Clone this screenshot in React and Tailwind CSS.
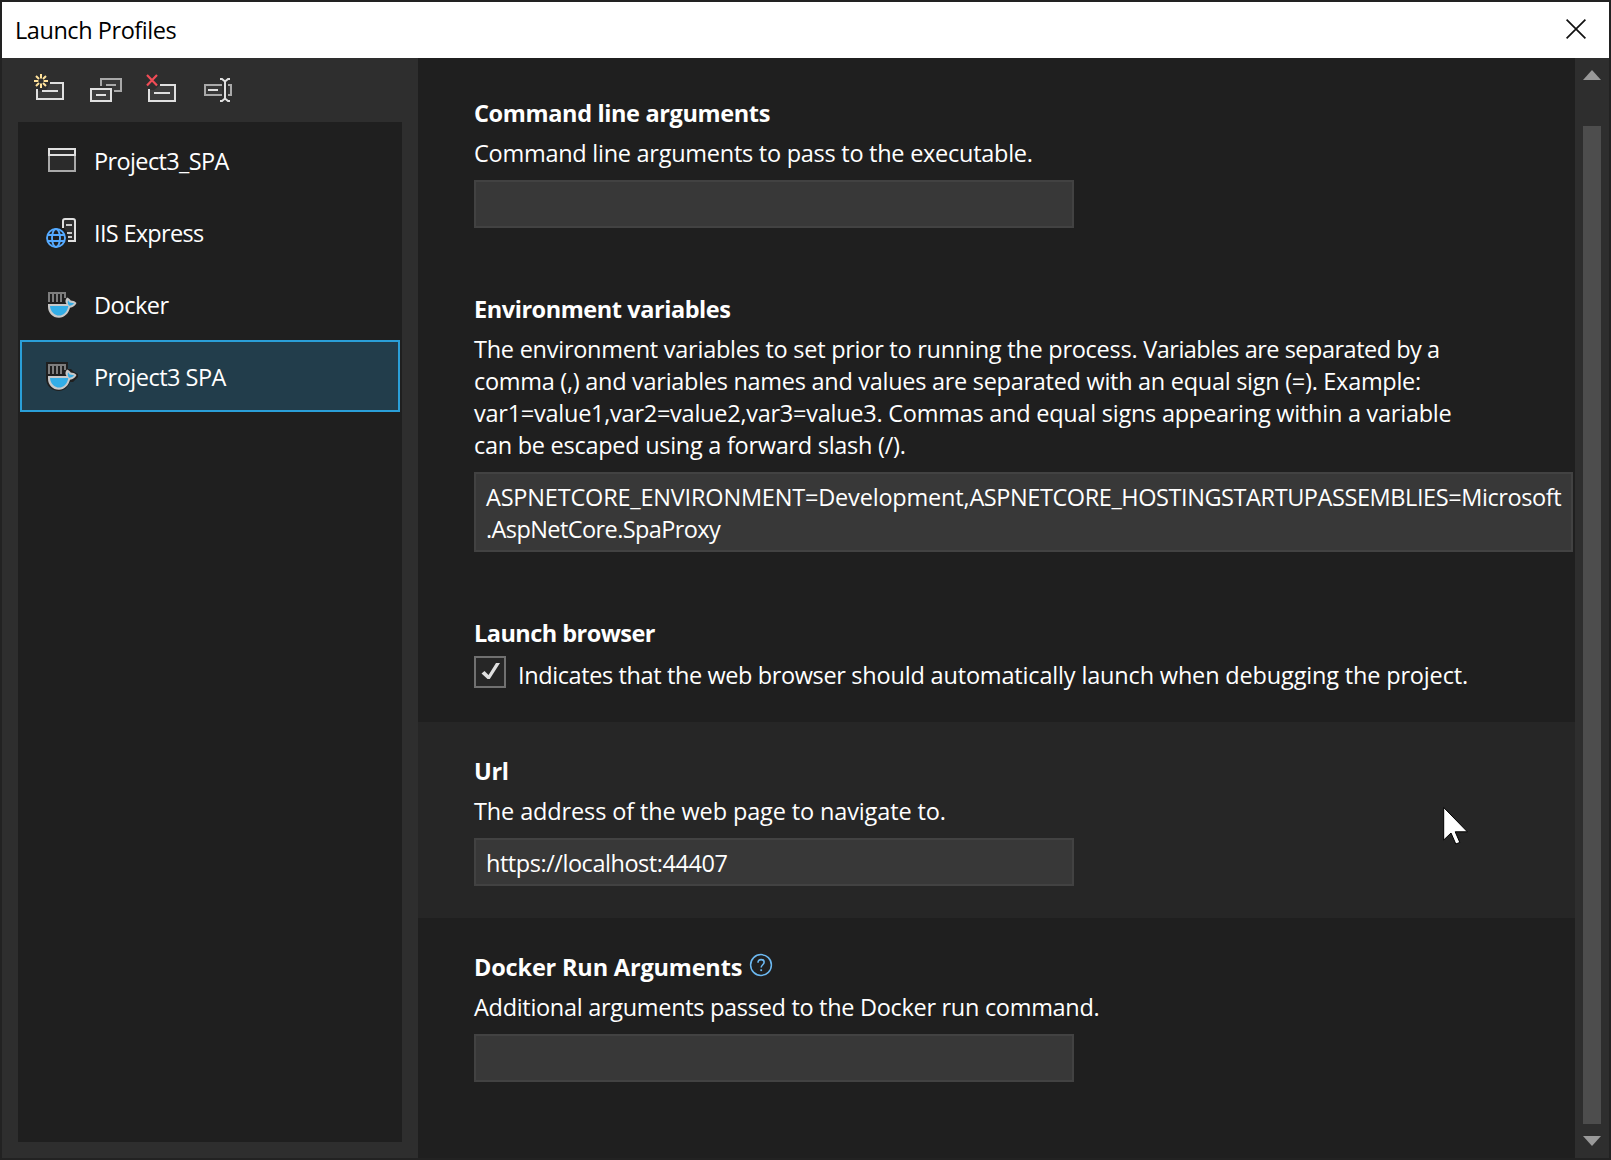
import React from "react";

function NewIcon() {
  return (
    <svg viewBox="34 72 32 32" className="h-8 w-8">
      <path d="M37 91v8h26V83H50l-4 8z" fill="#3d3d3d" />
      <path d="M37 89v10h26V83H50" fill="none" stroke="#e0e0e0" strokeWidth="2" />
      <path d="M42 91h16" stroke="#e0e0e0" strokeWidth="2" />
      <path d="M41 74v4.400M41 83.600v4.400M34 81h4.400M43.600 81h4.400M36 76l3 3M46 76l-3 3M36 86l3-3M46 86l-3-3" stroke="#ffe29b" strokeWidth="2" fill="none" />
    </svg>
  );
}

function DuplicateIcon() {
  return (
    <svg viewBox="90 72 32 32" className="h-8 w-8">
      <path d="M100 79h21v12h-9v-5h-12z" fill="#383838" />
      <path d="M101 86v-7h20v12h-7M106 85h10" fill="none" stroke="#a9a9a9" strokeWidth="2" />
      <rect x="91" y="89" width="20" height="12" fill="#3d3d3d" stroke="#e0e0e0" strokeWidth="2" />
      <path d="M96 95h10" stroke="#e0e0e0" strokeWidth="2" />
    </svg>
  );
}

function DeleteIcon() {
  return (
    <svg viewBox="146 72 32 32" className="h-8 w-8">
      <path d="M149 90v11h26V85h-15l-6 5z" fill="#3d3d3d" />
      <path d="M149 89v12h26V85h-15" fill="none" stroke="#e0e0e0" strokeWidth="2" />
      <path d="M154 93h16" stroke="#e0e0e0" strokeWidth="2" />
      <path d="M147 75l10 10.500M157 75l-10 10.500" stroke="#f04c56" strokeWidth="2.200" />
    </svg>
  );
}

function RenameIcon() {
  return (
    <svg viewBox="202 72 32 32" className="h-8 w-8">
      <path d="M205 85h17v10h-17zM228 85h3v10h-3z" fill="#383838" />
      <path d="M222 85h-17v10h17M228 85h3v10h-3" fill="none" stroke="#a9a9a9" strokeWidth="2" />
      <path d="M208 90h10" stroke="#e0e0e0" strokeWidth="2" />
      <path d="M220 79h2l3 2.500 3-2.500h2M220 101h2l3-2.500 3 2.500h2M225 81v18" fill="none" stroke="#e0e0e0" strokeWidth="2" />
    </svg>
  );
}

function WindowIcon() {
  return (
    <svg viewBox="46 144 32 32" className="h-8 w-8">
      <rect x="49" y="149" width="26" height="22" fill="#2b2b2b" stroke="#a9a9a9" strokeWidth="2" />
      <path d="M49 156v-7h26v7M49 155h26" fill="none" stroke="#e0e0e0" strokeWidth="2" />
    </svg>
  );
}

function ServerIcon() {
  return (
    <svg viewBox="46 216 32 32" className="h-8 w-8">
      <path d="M63 227v-8h12v22h-7v-8z" fill="#2e2e2e" />
      <path d="M63 228v-7a2 2 0 0 1 2-2h8a2 2 0 0 1 2 2v20h-7" fill="none" stroke="#e0e0e0" strokeWidth="2" />
      <path d="M66 225h6M67 233h5M68 237h4" stroke="#c8c8c8" strokeWidth="2" />
      <circle cx="56" cy="238" r="11" fill="#1f1f1f" />
      <g fill="none" stroke="#55aaff" strokeWidth="1.900">
        <circle cx="56" cy="238" r="9" />
        <ellipse cx="56" cy="238" rx="4" ry="9" />
        <path d="M48 235h16M48 241h16" />
      </g>
    </svg>
  );
}

function DockerIcon({ outlined }) {
  return (
    <svg viewBox="46 288 32 32" className="h-8 w-8 overflow-visible">
      {outlined && (
        <path d="M46 290h22v7l3 0 3 3 4 2v3l-5 5-3 0c-2 5-6 9-11 9-7 0-13-5-13-13z" fill="#1f1f1f" />
      )}
      <path d="M48 293h18M49 294v8M53 294v8M57 294v8M61 294v8M65 294v4" stroke="#7d7d7d" strokeWidth="2" />
      <path d="M48 304h18.500c-1.500-2-1.500-4 .5-6.500 1.500.5 3 1.500 3.700 3 2 0 4 .7 5.800 2.500-1.500 2.800-3.500 4.500-6.500 4.800-1.500 5.700-5.500 9.900-11 9.900-6.500 0-11-5-11-11z" fill="#c8c8c8" />
      <path d="M50 306h18.300c-.8 5.500-4.300 9.600-9.100 9.600-4.900 0-8.800-4.100-9.200-9.600z" fill="#33ade6" />
      <path d="M68 300.300l1.700 2.300 4.500.7c-1.300 1.500-2.700 2.400-5 2.500-1.300-1.300-1.900-3.300-1.200-5.500z" fill="#33ade6" />
    </svg>
  );
}

function HelpIcon() {
  return (
    <svg viewBox="0 0 24 24" className="mt-0.5 ml-[7px] h-6 w-6">
      <circle cx="12" cy="12" r="10.400" fill="none" stroke="#6cb8f0" strokeWidth="1.500" />
      <path d="M9 9.700c0-2 1.200-3.100 3.100-3.100 1.800 0 3 1 3 2.700 0 2.400-2.900 2.600-2.900 5.200" fill="none" stroke="#6cb8f0" strokeWidth="1.600" />
      <path d="M11.300 16.300h1.800v1.800h-1.800z" fill="#6cb8f0" />
    </svg>
  );
}

const profiles = [
  { name: "Project3_SPA", icon: <WindowIcon />, tracking: "tracking-[-0.626px]" },
  { name: "IIS Express", icon: <ServerIcon />, tracking: "tracking-[-0.685px]" },
  { name: "Docker", icon: <DockerIcon />, tracking: "tracking-[-0.497px]" },
  { name: "Project3 SPA", icon: <DockerIcon outlined />, tracking: "tracking-[-0.518px]", selected: true },
];

function Heading({ children, tracking }) {
  return <h2 className={"font-bold whitespace-nowrap " + tracking}>{children}</h2>;
}

function Line({ children, tracking = "" }) {
  return <div className={"whitespace-nowrap " + tracking}>{children}</div>;
}

function Section({ children, className = "pb-8" }) {
  return <section className={"shrink-0 pt-[33px] pl-14 " + className}>{children}</section>;
}

function Field({ children, className = "h-12 w-[600px] pl-2.5" }) {
  return (
    <div className={"mt-[11px] border-2 border-[#424242] bg-[#383838] pt-[7px] " + className}>{children}</div>
  );
}

export default function App() {
  return (
    <div className="relative flex h-[1160px] w-[1611px] flex-col overflow-hidden border-2 border-[#222222] bg-[#1f1f1f] font-['Open_Sans','Noto_Sans',sans-serif] text-[23.5px] leading-8 text-white">
      <header className="flex h-14 shrink-0 items-start justify-between bg-white pt-3 pr-[23px] pl-[13px] text-black">
        <h1 className="tracking-[-0.448px]">Launch Profiles</h1>
        <svg viewBox="0 0 20 20" className="mt-[5px] h-5 w-5">
          <path d="M.6.6l18.800 18.800M19.400.6L.6 19.400" stroke="#111" strokeWidth="1.700" />
        </svg>
      </header>

      <div className="flex min-h-0 flex-1">
        <aside className="flex w-[416px] shrink-0 flex-col bg-[#2e2e2e] px-4 pb-4">
          <div className="flex h-16 shrink-0 gap-6 pt-[14px] pl-4">
            <NewIcon />
            <DuplicateIcon />
            <DeleteIcon />
            <RenameIcon />
          </div>
          <ul className="flex-1 bg-[#1f1f1f] p-0.5">
            {profiles.map((p) => (
              <li
                key={p.name}
                className={
                  "flex h-[72px] items-center gap-4 border-2 pl-6 " +
                  (p.selected ? "border-[#2a9fd8] bg-[#223d4b]" : "border-transparent")
                }
              >
                {p.icon}
                <span className={"mt-px " + p.tracking}>{p.name}</span>
              </li>
            ))}
          </ul>
        </aside>

        <main className="flex min-w-0 flex-1 flex-col pt-1.5">
          <Section>
            <Heading tracking="tracking-[-0.360px]">Command line arguments</Heading>
            <div className="mt-2">
              <Line tracking="tracking-[-0.263px]">Command line arguments to pass to the executable.</Line>
            </div>
            <Field />
          </Section>

          <Section>
            <Heading tracking="tracking-[-0.440px]">Environment variables</Heading>
            <div className="mt-2">
              <Line>
                <span className="tracking-[-0.257px]">The environment variables to set prior to running the process. </span>
                <span className="tracking-[-0.500px]">Variables are separated by a</span>
              </Line>
              <Line tracking="tracking-[-0.284px]">comma (,) and variables names and values are separated with an equal sign (=). Example:</Line>
              <Line tracking="tracking-[-0.252px]">var1=value1,var2=value2,var3=value3. Commas and equal signs appearing within a variable</Line>
              <Line tracking="tracking-[-0.275px]">can be escaped using a forward slash (/).</Line>
            </div>
            <Field className="h-20 w-[1099px] pl-2.5">
              <Line>
                <span className="tracking-[-0.190px]">ASPNETCORE_ENVIRONMENT=Development,</span>
                <span className="tracking-[-0.420px]">ASPNETCORE_HOSTINGSTARTUPASSEMBLIES=Microsoft</span>
              </Line>
              <Line tracking="tracking-[-0.590px]">.AspNetCore.SpaProxy</Line>
            </Field>
          </Section>

          <Section className="pb-[34px]">
            <Heading tracking="tracking-[-0.540px]">Launch browser</Heading>
            <div className="mt-[7px] flex h-8 gap-3">
              <div className="flex h-8 w-8 shrink-0 border-2 border-[#707070] bg-[#262626]">
                <svg viewBox="0 0 28 28" className="h-7 w-7">
                  <path d="M5.500 15.500l3-2.500 4 4L20 5h4L13.800 21h-2.300z" fill="#e0e0e0" />
                </svg>
              </div>
              <div className="pt-[3px]">
                <Line>
                  <span className="tracking-[-0.390px]">Indicates that the web browser </span>
                  <span className="tracking-[-0.165px]">should automatically launch when debugging the project.</span>
                </Line>
              </div>
            </div>
          </Section>

          <Section className="bg-[#262626] pb-8">
            <Heading tracking="tracking-[-0.300px]">Url</Heading>
            <div className="mt-2">
              <Line tracking="tracking-[-0.130px]">The address of the web page to navigate to.</Line>
            </div>
            <Field>
              <Line tracking="tracking-[-0.460px]">https://localhost:44407</Line>
            </Field>
          </Section>

          <Section>
            <div className="flex h-8">
              <Heading tracking="tracking-[-0.175px]">Docker Run Arguments</Heading>
              <HelpIcon />
            </div>
            <div className="mt-2">
              <Line tracking="tracking-[-0.303px]">Additional arguments passed to the Docker run command.</Line>
            </div>
            <Field />
          </Section>
        </main>

        <div className="flex w-[34px] shrink-0 flex-col items-center bg-[#2e2e2e] pt-3 pb-3">
          <svg viewBox="0 0 18 10" className="h-2.5 w-[18px] shrink-0">
            <path d="M9 0l9 10H0z" fill="#999" />
          </svg>
          <div className="mt-[46px] mb-3 w-[18px] flex-1 bg-[#4d4d4d]" />
          <svg viewBox="0 0 18 10" className="h-2.5 w-[18px] shrink-0">
            <path d="M0 0h18l-9 10z" fill="#999" />
          </svg>
        </div>
      </div>

      <svg viewBox="0 0 26 40" className="absolute top-[804px] left-[1441px] h-10 w-[26px]">
        <path d="M.7 1.500v32.500l7.300-7 4.800 11 4-1.600-4.600-10.600h12.200z" fill="#fff" stroke="#000" strokeWidth="1" />
      </svg>
    </div>
  );
}
